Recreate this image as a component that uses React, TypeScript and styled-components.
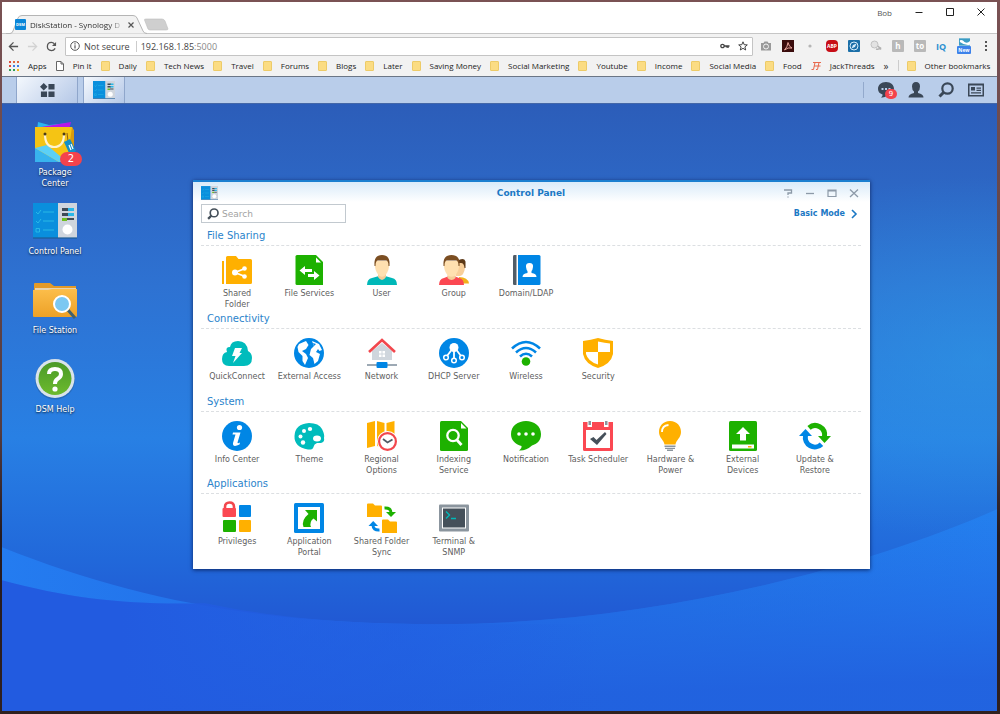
import * as React from 'react';
import styled, { createGlobalStyle, css } from 'styled-components';

const uiFont = '"Open Sans", "Noto Sans", sans-serif';
const dsmFont = '"DejaVu Sans", sans-serif';

/* ---------- drawings ---------- */

const SharedFolderIcon = () => (
  <svg viewBox='0 0 30 30'>
    <path d='M0 6h2v23H0zM4 2.5Q4 1 5.500 1H14l2.500 3H28.500Q30 4 30 5.500V27.500Q30 29 28.500 29H4z' fill='#ffb000' />
    <path d='M23 13.500L13 17.500L23 21.500' fill='none' stroke='#fff' strokeWidth='1.800' />
    <circle cx='22.500' cy='13.500' r='2.300' fill='#fff' />
    <circle cx='13' cy='17.500' r='3' fill='#fff' />
    <circle cx='22.500' cy='21.500' r='2.300' fill='#fff' />
  </svg>
);

const FileServicesIcon = () => (
  <svg viewBox='0 0 30 30'>
    <path d='M3 0H22L29 7V30H3Q1.500 30 1.500 28.500V1.500Q1.500 0 3 0z' fill='#1db100' />
    <path d='M22 2.500V7.500H27z' fill='#fff' />
    <path d='M5.500 15.500L11 11V14H18V17H11V20zM25.500 20.500L20 16V19H14V22H20V25z' fill='#fff' />
  </svg>
);

const UserIcon = () => (
  <svg viewBox='0 0 30 30'>
    <path d='M0 30Q0 24 5 23L12 21H18L25 23Q30 24 30 30z' fill='#00b8b8' />
    <path d='M11 18H19V22Q15 28 11 22z' fill='#f5cc98' />
    <path d='M8 6H22V12Q21 18 17.500 21Q15 22.500 12.500 21Q9 18 8 12z' fill='#ffe0b0' />
    <path d='M7.500 11Q6.500 0 15 0Q23.500 0 22.500 11H21.500Q21.500 5.500 19 5.500H11Q8.500 5.500 8.500 11z' fill='#7b4e22' />
  </svg>
);

const GroupIcon = () => (
  <svg viewBox='0 0 30 30'>
    <path d='M20 28.500V22Q29 22 30 28.500z' fill='#f2b21c' />
    <path d='M17 7H26V13Q25 20 21 21H17z' fill='#f8cf9a' />
    <path d='M18 6Q25 2 26.500 6.500V13H25.500Q25 8 22 8H18z' fill='#5d3917' />
    <path d='M0 30Q0 24 5 23L10 21H15L20 23Q25 24 25 30z' fill='#fb4852' />
    <path d='M8.500 18H16.500V23Q12.500 27 8.500 23z' fill='#f5cc98' />
    <path d='M5 6H20V12Q19 18 15.500 21Q12.500 22.500 9.500 21Q6 18 5 12z' fill='#ffe0b0' />
    <path d='M4.500 11Q3.500 0 12.500 0Q21.500 0 20.500 11H19.500Q19.500 5.500 17 5.500H8Q5.500 5.500 5.500 11z' fill='#7b4e22' />
  </svg>
);

const DomainIcon = () => (
  <svg viewBox='0 0 30 30'>
    <path d='M3 0H5.500V30H3Q2 30 2 28.500V1.500Q2 0 3 0z' fill='#515c66' />
    <path d='M7 0H28Q29.500 0 29.500 1.500V28.500Q29.500 30 28 30H7z' fill='#0086e5' />
    <path d='M15 12Q14.500 8 18.500 8Q22.500 8 22 12Q21.500 15.500 20.500 16V18Q25.500 18.500 25.500 22H11.500Q11.500 18.500 16.500 18V16Q15.500 15.500 15 12z' fill='#fff' />
  </svg>
);

const QuickConnectIcon = () => (
  <svg viewBox='0 0 30 30'>
    <path d='M7 28Q0 28 0 21Q0 15 5 14Q3 9 8 9Q9 3 16 3Q25 3 26 13Q30 15 30 20Q30 28 22 28z' fill='#00bcbc' />
    <path d='M13 10H20L17.500 15H20L11 25L13.500 18H10z' fill='#fff' />
  </svg>
);

const ExternalAccessIcon = () => (
  <svg viewBox='0 0 30 30'>
    <circle cx='15' cy='15' r='15' fill='#0086e5' />
    <path d='M5 6L12 3L14.500 7L12 11L8 13L12 16L14 20L11 27L8.500 23V18L4.500 14L3.500 9z' fill='#fff' />
    <path d='M18 3L25 6L28 12L25.500 13L24 11L22 14L26 16L24 23L20.500 26L19 20L15.500 17L17 11L20 8z' fill='#fff' />
    <path d='M19 5L22 6L20 8z' fill='#0086e5' />
  </svg>
);

const NetworkIcon = () => (
  <svg viewBox='0 0 30 30'>
    <path d='M5 13L15 5L25 13V22H5z' fill='#cfd6dd' />
    <path d='M2 14L15 2L28 14' fill='none' stroke='#f2474d' strokeWidth='2.600' />
    <path d='M12 13h2.500v2.500H12zM15.500 13H18v2.500h-2.500zM12 16.500h2.500V19H12zM15.500 16.500H18V19h-2.500z' fill='#fff' />
    <path d='M0 26H30V28H0z' fill='#9da9b4' />
    <rect x='9.500' y='24' width='11' height='6' rx='1' fill='#0086e5' />
  </svg>
);

const DhcpIcon = () => (
  <svg viewBox='0 0 30 30'>
    <circle cx='15' cy='15' r='15' fill='#0086e5' />
    <circle cx='15' cy='9.500' r='4.500' fill='#fff' />
    <path d='M15 12V20M12.500 12L8 18M17.500 12L22 18' stroke='#fff' strokeWidth='1.800' />
    <g fill='#0086e5' stroke='#fff' strokeWidth='1.500'>
      <circle cx='7' cy='19.500' r='2.300' />
      <circle cx='15' cy='22.500' r='2.300' />
      <circle cx='23' cy='19.500' r='2.300' />
    </g>
  </svg>
);

const WirelessIcon = () => (
  <svg viewBox='0 0 30 30'>
    <g fill='none' stroke='#0086e5' strokeWidth='2.600'>
      <path d='M1 10.500Q15 -2.500 29 10.500' />
      <path d='M5 14.500Q15 5.500 25 14.500' />
      <path d='M9 18.500Q15 13 21 18.500' />
    </g>
    <circle cx='15' cy='23.500' r='4.300' fill='#1db100' />
  </svg>
);

const SecurityIcon = () => (
  <svg viewBox='0 0 30 30'>
    <path d='M0 3Q8 2 15 0Q22 2 30 3V16Q28 26 15 30Q2 26 0 16z' fill='#ffb000' />
    <path d='M15 3.500Q22 5 27 5.500V14H15zM15 14V26.500Q5 23.500 3 16V14z' fill='#fff' />
  </svg>
);

const InfoIcon = () => (
  <svg viewBox='0 0 30 30'>
    <circle cx='15' cy='15' r='15' fill='#0086e5' />
    <circle cx='17.500' cy='6.500' r='2.600' fill='#fff' />
    <path d='M11 11.500H18.500L15.500 21.500Q15.500 23 18 21.500L17.500 23.500Q10.500 27 11 22L13.500 13.500H10.500z' fill='#fff' />
  </svg>
);

const ThemeIcon = () => (
  <svg viewBox='0 0 30 30'>
    <path d='M15 2Q25 2 28 8Q31 14 30 17Q31 21 27 22Q25 22 23 22Q20 23 19.500 26Q19 29 14 28.500Q0 26 0.500 15Q1 3 15 2z' fill='#00bcbc' />
    <g fill='#fff'>
      <ellipse cx='16' cy='8' rx='2.200' ry='2' />
      <circle cx='10' cy='10' r='2' />
      <circle cx='6.500' cy='15.500' r='2' />
      <circle cx='9' cy='21.500' r='2.200' />
      <ellipse cx='23' cy='17.500' rx='4' ry='3' />
    </g>
  </svg>
);

const RegionalIcon = () => (
  <svg viewBox='0 0 30 30'>
    <path d='M0 2L8 0V25L0 27zM10 0L17.500 2V27L10 25zM19.500 2L27.500 0V25L19.500 27z' fill='#ffb000' />
    <circle cx='20.500' cy='20.500' r='10.500' fill='#fff' />
    <circle cx='20.500' cy='20.500' r='8.400' fill='#fff' stroke='#f2474d' strokeWidth='2.200' />
    <path d='M16 18L20.500 21.500L25.500 18.500' fill='none' stroke='#515c66' strokeWidth='1.800' />
  </svg>
);

const IndexingIcon = () => (
  <svg viewBox='0 0 30 30'>
    <path d='M2.500 0H22L29 7V28.500Q29 30 27.500 30H2.500Q1 30 1 28.500V1.500Q1 0 2.500 0z' fill='#1db100' />
    <path d='M22 2V7.500H27.500z' fill='#fff' />
    <circle cx='14' cy='14.500' r='5.700' fill='none' stroke='#fff' strokeWidth='2.300' />
    <path d='M18 19L22.500 24' stroke='#fff' strokeWidth='2.800' />
  </svg>
);

const NotificationIcon = () => (
  <svg viewBox='0 0 30 30'>
    <path d='M15 0C23 0 30 5 30 13C30 20 26 23 21 24.500Q15 30 8 29.500Q11 27 10.500 25C4 23 0 19 0 13C0 5 7 0 15 0z' fill='#1db100' />
    <circle cx='8' cy='13' r='1.800' fill='#fff' />
    <circle cx='15' cy='13' r='1.800' fill='#fff' />
    <circle cx='22' cy='13' r='1.800' fill='#fff' />
  </svg>
);

const SchedulerIcon = () => (
  <svg viewBox='0 0 30 30'>
    <path d='M0 1H30V28.500Q30 30 28.500 30H1.500Q0 30 0 28.500z' fill='#fb4852' />
    <path d='M3 9H27V27H3z' fill='#fff' />
    <path d='M4.500 0H9V6H4.500zM21 0H25.500V6H21z' fill='#fff' />
    <path d='M5.500 0H8V4H5.500zM22 0H24.500V4H22z' fill='#8b959e' />
    <path d='M7 18L10.500 16L13.500 19L22 11L23.500 13L14 24z' fill='#45505a' />
  </svg>
);

const HardwareIcon = () => (
  <svg viewBox='0 0 30 30'>
    <path d='M15 0C22 0 26 5 26 11C26 17 21 19 20.500 23.500H9.500C9 19 4 17 4 11C4 5 8 0 15 0z' fill='#ffb000' />
    <path d='M7 11Q7 4.500 13.500 4' fill='none' stroke='#fff' strokeWidth='1.800' />
    <path d='M9.500 24.500H20.500V26H9.500zM10 26.800H20V28H10zM12 28.600H18V30H12z' fill='#8b959e' />
  </svg>
);

const DevicesIcon = () => (
  <svg viewBox='0 0 30 30'>
    <rect x='1' width='28' height='30' rx='1.500' fill='#1db100' />
    <path d='M15 6L22 13H18V19.500H12V13H8zM4 23.500H26V27.500H4z' fill='#fff' />
    <path d='M20 25H23.500V26.500H20z' fill='#ffb000' />
  </svg>
);

const UpdateIcon = () => (
  <svg viewBox='0 0 30 30'>
    <path d='M9 6.800A9.500 9.500 0 0 1 24.500 15.500' fill='none' stroke='#1db100' strokeWidth='5' />
    <path d='M18 15H31L24.500 22z' fill='#1db100' />
    <path d='M21.500 23.200A9.500 9.500 0 0 1 5.500 14.500' fill='none' stroke='#0086e5' strokeWidth='5' />
    <path d='M-1 15H12L5.500 8z' fill='#0086e5' />
  </svg>
);

const PrivilegesIcon = () => (
  <svg viewBox='0 0 30 30'>
    <path d='M3 7V4Q3 -0.500 7.500 -0.500Q12 -0.500 12 4V7' fill='none' stroke='#f2474d' strokeWidth='2.600' />
    <rect x='0.500' y='5' width='13.500' height='9' rx='1' fill='#fb4852' />
    <rect x='17' y='2' width='12' height='12' rx='1' fill='#0086e5' />
    <rect x='1' y='17' width='13' height='12' rx='1' fill='#1db100' />
    <rect x='17' y='17' width='12' height='12' rx='1' fill='#ffb000' />
  </svg>
);

const PortalIcon = () => (
  <svg viewBox='0 0 30 30'>
    <rect width='30' height='30' rx='1.500' fill='#0086e5' />
    <path d='M4 4H26V26H4z' fill='#fff' />
    <path d='M11 7H23V18.500L19.500 15.500Q15 19 17 24H9.500Q7 17 14.500 11z' fill='#1db100' />
  </svg>
);

const FolderSyncIcon = () => (
  <svg viewBox='0 0 30 30'>
    <path d='M0 1.500Q0 0.500 1 0.500H6L8 2.500H14Q15 2.500 15 3.500V14H0zM15 17.500Q15 16.500 16 16.500H21L23 18.500H29Q30 18.500 30 19.500V30H15z' fill='#ffb000' />
    <path d='M17.500 5Q24 4.500 24 10' fill='none' stroke='#1db100' strokeWidth='3' />
    <path d='M19 9H29L24 14z' fill='#1db100' />
    <path d='M12.500 27Q6 27.500 6 22' fill='none' stroke='#0086e5' strokeWidth='3' />
    <path d='M1.500 23H11L6.200 18z' fill='#0086e5' />
  </svg>
);

const TerminalIcon = () => (
  <svg viewBox='0 0 30 30'>
    <rect y='1.500' width='30' height='27' rx='1' fill='#8b959e' />
    <path d='M3 4.500H27V25.500H3z' fill='#fff' />
    <path d='M4 5.500H26V24.500H4z' fill='#45505a' />
    <path d='M7 8.500L10.500 12L7 15.500M12 15.500H17' fill='none' stroke='#00b8b8' strokeWidth='1.400' />
  </svg>
);

const ControlPanelIcon = () => (
  <svg viewBox='0 0 44 36'>
    <path d='M0 0H25V35H0z' fill='#0a8fdd' />
    <path d='M25 0H44V35H25z' fill='#cfd5dd' />
    <path d='M0 34H44V36H0z' fill='#1c5c94' opacity='0.600' />
    <path d='M3 9l2 2l3-4M10 9h11M3 18l2 2l3-4M10 18h11M3 25.500h3.500v3.500h-3.500zM10 27h11' fill='none' stroke='#2fc0e8' opacity='0.850' />
    <path d='M29 5H36V8H29zM29 10H36V13H29z' fill='#3f4a55' />
    <path d='M35 5H41V8H35zM35 10H41V13H35z' fill='#29b7e8' />
    <path d='M29 15H34V18H29z' fill='#6fbf1f' />
    <path d='M34 15H41V17H34z' fill='#3f4a55' />
    <circle cx='34.500' cy='26.500' r='5' fill='#fff' />
  </svg>
);

const PackageIcon = () => (
  <svg viewBox='0 0 44 42'>
    <path d='M5 1L16 4L36 2V10H4z' fill='#2cb6f0' />
    <path d='M8 6L38 1L35 12H6z' fill='#b518e8' />
    <path d='M2 6H39L41 10V41H2z' fill='#f5c414' />
    <path d='M39 6L41 10V41H34z' fill='#d99a0b' />
    <path d='M2 27L26 41H2z' fill='#38b4ee' />
    <path d='M2 27L14 24L34 41H26z' fill='#5bd0f7' />
    <path d='M12 13Q12 26 21 26Q31 26 31 13' fill='none' stroke='#fff3cf' strokeWidth='2.200' />
    <circle cx='12' cy='13' r='1.500' fill='#4b3a14' />
    <circle cx='31' cy='13' r='1.500' fill='#4b3a14' />
    <path d='M34 12L35 20' stroke='#8a5a14' />
    <path d='M31 21L37 18L43 30L37 34z' fill='#1390c8' />
    <path d='M36 24l2 5M38 23l2 5' stroke='#fff' strokeWidth='1.200' />
  </svg>
);

const FileStationIcon = () => (
  <svg viewBox='0 0 44 36'>
    <defs>
      <linearGradient id='folder' x2='0' y2='1'>
        <stop offset='0' stopColor='#fcbe4b' />
        <stop offset='1' stopColor='#eda127' />
      </linearGradient>
    </defs>
    <path d='M1 2Q1 1 2 1H17L21 4H43V12H1z' fill='#e39a28' />
    <path d='M2 6H43V10H2z' fill='#e8d3ae' />
    <path d='M0 8H15L19 7H44V34Q44 35 43 35H1Q0 35 0 34z' fill='url(#folder)' />
    <path d='M35 28L42 36' stroke='#41616e' strokeWidth='3' />
    <circle cx='29' cy='22' r='8' fill='#7cc8f2' stroke='#fff' strokeWidth='2' />
  </svg>
);

const HelpIcon = () => (
  <svg viewBox='0 0 42 42'>
    <defs>
      <linearGradient id='help' x2='0' y2='1'>
        <stop offset='0' stopColor='#4a9a28' />
        <stop offset='1' stopColor='#6dba2e' />
      </linearGradient>
    </defs>
    <circle cx='21' cy='21.500' r='20' fill='#204f8d' opacity='0.400' />
    <circle cx='21' cy='20.500' r='19.500' fill='#d9e3ea' />
    <circle cx='21' cy='20.500' r='16.500' fill='url(#help)' />
    <path d='M15 16Q15 11 21 11Q27 11 27 16Q27 19 23.500 21Q21 22.500 21 26' fill='none' stroke='#fff' strokeWidth='4' />
    <circle cx='21' cy='31' r='2.600' fill='#fff' />
  </svg>
);

const SearchIcon = () => (
  <svg viewBox='0 0 16 16'>
    <circle cx='9.500' cy='6.500' r='5.200' fill='none' stroke='currentColor' strokeWidth='2.200' />
    <path d='M6 10L1.500 14.500' stroke='currentColor' strokeWidth='3' />
  </svg>
);

const ChatIcon = () => (
  <svg viewBox='0 0 16 16'>
    <path d='M8 0C13 0 16 3 16 7C16 11 13 13 9 13.500Q7 16 3 15.500Q5 14 4.500 12.500Q0 11 0 7C0 3 3 0 8 0z' fill='currentColor' />
    <path d='M3.500 6h2v2h-2zM7 6h2v2H7zM10.500 6h2v2h-2z' fill='#b9cdea' />
  </svg>
);

const PersonIcon = () => (
  <svg viewBox='0 0 16 16'>
    <path d='M4 4.500Q4 0 8 0Q12 0 12 4.500Q12 8 10 9.500V11Q15.500 12 15.500 15.500H0.500Q0.500 12 6 11V9.500Q4 8 4 4.500z' fill='currentColor' />
  </svg>
);

const WidgetsIcon = () => (
  <svg viewBox='0 0 16 16'>
    <path d='M0 1.500H16V14.500H0zM1.500 3.500V13H14.500V3.500z' fill='currentColor' fillRule='evenodd' />
    <path d='M3 5H7V8.500H3zM8.500 5.500H13V6.800H8.500zM8.500 7.800H13V9H8.500zM3 10.200H13V11.500H3z' fill='currentColor' />
  </svg>
);

const MenuIcon = () => (
  <svg viewBox='0 0 16 16'>
    <path d='M4 0L8 4L4 8L0 4zM9 1H15.500V7H9zM1 9H7.500V15H1zM9 9H15.500V15H9z' fill='currentColor' />
  </svg>
);

const BackIcon = () => (
  <svg viewBox='0 0 12 12'>
    <path d='M11 6H2M6 1.500L1.500 6L6 10.500' fill='none' stroke='currentColor' strokeWidth='1.400' />
  </svg>
);

const ForwardIcon = () => (
  <svg viewBox='0 0 12 12'>
    <path d='M1 6H10M6 1.500L10.500 6L6 10.500' fill='none' stroke='#d2d2d2' strokeWidth='1.400' />
  </svg>
);

const ReloadIcon = () => (
  <svg viewBox='0 0 12 12'>
    <path d='M10 8Q8.500 10.500 6 10.500Q1.500 10 1.500 6Q1.500 1.500 6 1.500Q8.500 1.500 9.500 4' fill='none' stroke='currentColor' strokeWidth='1.400' />
    <path d='M11 1V5.500H6.500z' fill='currentColor' />
  </svg>
);

const Wallpaper = () => (
  <WallpaperSvg viewBox='0 0 995 608' preserveAspectRatio='none' aria-hidden='true'>
    <defs>
      <linearGradient id='sky' x2='0' y2='1'>
        <stop offset='0' stopColor='#2c5db9' />
        <stop offset='0.300' stopColor='#2e72d2' />
        <stop offset='0.550' stopColor='#2880e4' />
        <stop offset='0.750' stopColor='#2168da' />
        <stop offset='0.860' stopColor='#2158d3' />
        <stop offset='1' stopColor='#2158d3' />
      </linearGradient>
      <radialGradient id='glow' cx='0.980' cy='0.420' r='0.300'>
        <stop offset='0' stopColor='#2e9be6' stopOpacity='0.550' />
        <stop offset='1' stopColor='#2e9be6' stopOpacity='0' />
      </radialGradient>
      <linearGradient id='wave' x2='1'>
        <stop offset='0' stopColor='#247cf0' />
        <stop offset='0.400' stopColor='#226ae6' />
        <stop offset='0.700' stopColor='#2277e6' />
        <stop offset='1' stopColor='#2480ee' />
      </linearGradient>
      <linearGradient id='deep' x2='0.200' y2='1'>
        <stop offset='0.200' stopColor='#2264e6' stopOpacity='0' />
        <stop offset='1' stopColor='#2160de' stopOpacity='0.900' />
      </linearGradient>
      <linearGradient id='shade' x2='1'>
        <stop offset='0.200' stopColor='#225be0' />
        <stop offset='1' stopColor='#225be0' stopOpacity='0' />
      </linearGradient>
    </defs>
    <path d='M0 0H995V608H0z' fill='url(#sky)' />
    <path d='M0 0H995V608H0z' fill='url(#glow)' />
    <path d='M0 444C140 500 270 521 438 521C640 521 850 470 995 406V608H0z' fill='url(#wave)' />
    <path d='M0 477C70 496 130 502 203 500C280 516 350 521 438 521C640 521 850 470 995 406V608H0z' fill='url(#deep)' />
    <path d='M0 477C70 496 130 502 203 500C280 516 350 521 438 521H600V608H0z' fill='url(#shade)' />
  </WallpaperSvg>
);

/* ---------- data ---------- */

const bookmarks = [
  'Daily',
  'Tech News',
  'Travel',
  'Forums',
  'Blogs',
  'Later',
  'Saving Money',
  'Social Marketing',
  'Youtube',
  'Income',
  'Social Media',
  'Food',
];

interface Item {
  label: string;
  icon: React.FC;
}

const sections: { title: string; items: Item[] }[] = [
  {
    title: 'File Sharing',
    items: [
      { label: 'Shared\nFolder', icon: SharedFolderIcon },
      { label: 'File Services', icon: FileServicesIcon },
      { label: 'User', icon: UserIcon },
      { label: 'Group', icon: GroupIcon },
      { label: 'Domain/LDAP', icon: DomainIcon },
    ],
  },
  {
    title: 'Connectivity',
    items: [
      { label: 'QuickConnect', icon: QuickConnectIcon },
      { label: 'External Access', icon: ExternalAccessIcon },
      { label: 'Network', icon: NetworkIcon },
      { label: 'DHCP Server', icon: DhcpIcon },
      { label: 'Wireless', icon: WirelessIcon },
      { label: 'Security', icon: SecurityIcon },
    ],
  },
  {
    title: 'System',
    items: [
      { label: 'Info Center', icon: InfoIcon },
      { label: 'Theme', icon: ThemeIcon },
      { label: 'Regional\nOptions', icon: RegionalIcon },
      { label: 'Indexing\nService', icon: IndexingIcon },
      { label: 'Notification', icon: NotificationIcon },
      { label: 'Task Scheduler', icon: SchedulerIcon },
      { label: 'Hardware &\nPower', icon: HardwareIcon },
      { label: 'External\nDevices', icon: DevicesIcon },
      { label: 'Update &\nRestore', icon: UpdateIcon },
    ],
  },
  {
    title: 'Applications',
    items: [
      { label: 'Privileges', icon: PrivilegesIcon },
      { label: 'Application\nPortal', icon: PortalIcon },
      { label: 'Shared Folder\nSync', icon: FolderSyncIcon },
      { label: 'Terminal &\nSNMP', icon: TerminalIcon },
    ],
  },
];

const shortcuts = [
  { label: 'Package Center', icon: PackageIcon, badge: 2 },
  { label: 'Control Panel', icon: ControlPanelIcon },
  { label: 'File Station', icon: FileStationIcon },
  { label: 'DSM Help', icon: HelpIcon },
];

/* ---------- parts ---------- */

const Bookmark: React.FC<{ label: string; children: React.ReactNode }> = ({ label, children }) => (
  <BookmarkLink href='#'>
    {children}
    {label}
  </BookmarkLink>
);

const Browser: React.FC = () => (
  <header>
    <TabStrip>
      <TabShape>
        <svg viewBox='0 0 170 19' aria-hidden='true'>
          <path d='M0 18.500H4Q6 18.500 7 16L12 3Q13 0.500 16 0.500H127Q130 0.500 131 3L137 16Q138 18.500 141 18.500' fill='#f2f2f2' stroke='#b5b5b5' />
          <path d='M138.500 5Q138 4 140 4H156Q158 4 159 6L162 14Q162 15 160 15H144Q143 15 142 14z' fill='#cfcfcf' stroke='#bdbdbd' strokeWidth='0.600' />
        </svg>
        <TabContent>
          <Favicon>DSM</Favicon>
          <TabTitle>DiskStation - Synology D</TabTitle>
          <TabClose aria-label='Close tab'>
            <svg viewBox='0 0 6 6'>
              <path d='M0.500 0.500L5.500 5.500M5.500 0.500L0.500 5.500' stroke='#555' strokeWidth='1.200' />
            </svg>
          </TabClose>
        </TabContent>
      </TabShape>
      <WindowButtons>
        <Profile>Bob</Profile>
        <button aria-label='Minimize'>
          <svg viewBox='0 0 8 8'><path d='M0.500 4.500H7.500' stroke='#222' /></svg>
        </button>
        <button aria-label='Maximize'>
          <svg viewBox='0 0 8 8'><path d='M0.500 0.500H7.500V7.500H0.500z' fill='none' stroke='#222' /></svg>
        </button>
        <button aria-label='Close'>
          <svg viewBox='0 0 8 8'><path d='M0.500 0.500L7.500 7.500M7.500 0.500L0.500 7.500' stroke='#222' /></svg>
        </button>
      </WindowButtons>
    </TabStrip>
    <Toolbar>
      <NavButton aria-label='Back'><BackIcon /></NavButton>
      <NavButton aria-label='Forward' disabled><ForwardIcon /></NavButton>
      <NavButton aria-label='Reload'><ReloadIcon /></NavButton>
      <Omnibox>
        <svg width='10' height='10' viewBox='0 0 10 10'>
          <circle cx='5' cy='5' r='4.300' fill='none' stroke='#555' />
          <path d='M5 4.300V7.500M5 2.300V3.400' stroke='#555' strokeWidth='1.200' />
        </svg>
        <span>Not secure</span>
        <OmniDivider />
        <Address>192.168.1.85<em>:5000</em></Address>
        <svg width='10' height='10' viewBox='0 0 10 10'>
          <circle cx='2.500' cy='5' r='1.700' fill='none' stroke='#444' strokeWidth='1.300' />
          <path d='M4 5H9.500M8 5V7M6.500 5V6.500' stroke='#444' strokeWidth='1.400' />
        </svg>
        <svg width='10' height='10' viewBox='0 0 10 10'>
          <path d='M5 0.800L6.200 3.700L9.300 3.900L6.900 5.900L7.700 9L5 7.300L2.300 9L3.100 5.900L0.700 3.900L3.800 3.700z' fill='none' stroke='#444' />
        </svg>
      </Omnibox>
      <Extensions>
        <svg viewBox='0 0 12 12'>
          <path d='M1 3H3.500L4.500 1.500H7.500L8.500 3H11V10.500H1z' fill='#9a9a9a' />
          <circle cx='6' cy='6.500' r='2.500' fill='#9a9a9a' stroke='#f2f2f2' />
        </svg>
        <svg viewBox='0 0 12 12'>
          <path d='M0 0H12V12H0z' fill='#3b0d0d' />
          <path d='M2.500 10Q5.500 7 6 2.500Q7 7 10 8Q6 7 2.500 10z' fill='none' stroke='#e9a59c' />
        </svg>
        <svg viewBox='0 0 12 12'><circle cx='6' cy='6' r='1.600' fill='#b5b5b5' /></svg>
        <ExtBadge $shape='octagon' $bg='#c70d16'>ABP</ExtBadge>
        <svg viewBox='0 0 12 12'>
          <rect width='12' height='12' rx='1' fill='#1b6fa8' />
          <circle cx='6' cy='6' r='4' fill='none' stroke='#d5ecfa' />
          <path d='M8.500 3.500L7 7L3.500 8.500L5 5z' fill='#d5ecfa' />
        </svg>
        <svg viewBox='0 0 12 12'>
          <circle cx='4.500' cy='4.500' r='3.500' fill='#e3e3e3' stroke='#c2c2c2' />
          <path d='M6 9Q9 10 11 7.500M8 6L11 9.500' stroke='#b2b2b2' strokeWidth='1.500' fill='none' />
        </svg>
        <ExtBadge $shape='square' $bg='#b9b9b9'>h</ExtBadge>
        <ExtBadge $shape='square' $bg='#b9b9b9'>to</ExtBadge>
        <IqText>IQ</IqText>
        <NewExt>
          <svg viewBox='0 0 12 8'>
            <path d='M0 0H12V8H0z' fill='#3b9cc4' />
            <path d='M1 2Q4 1 6 4Q9 6 12 3V7Q6 8 1 4z' fill='#fff' />
          </svg>
          <b>New</b>
        </NewExt>
        <svg viewBox='0 0 12 12'>
          <path d='M5 1h2v2H5zM5 5h2v2H5zM5 9h2v2H5z' fill='#555' />
        </svg>
      </Extensions>
    </Toolbar>
    <BookmarkBar>
      <Bookmark label='Apps'>
        <svg width='10' height='10' viewBox='0 0 10 10'>
          <path d='M0 0h2v2H0zM0 4h2v2H0z' fill='#de4a3b' />
          <path d='M4 0h2v2H4zM8 0h2v2H8z' fill='#e0683b' />
          <path d='M4 4h2v2H4zM8 4h2v2H8z' fill='#3f7fe0' />
          <path d='M0 8h2v2H0zM4 8h2v2H4z' fill='#2f9e55' />
          <path d='M8 8h2v2H8z' fill='#f2b91c' />
        </svg>
      </Bookmark>
      <Bookmark label='Pin It'>
        <svg width='8' height='10' viewBox='0 0 8 10'>
          <path d='M0.500 0.500H5L7.500 3V9.500H0.500zM5 0.500V3H7.500' fill='#fff' stroke='#666' />
        </svg>
      </Bookmark>
      {bookmarks.map((label) => (
        <Bookmark key={label} label={label}>
          <FolderIcon />
        </Bookmark>
      ))}
      <Bookmark label='JackThreads'>
        <svg width='10' height='10' viewBox='0 0 10 10'>
          <path d='M0.500 8.500H2.500L4 1.500M2 1.500H10M5 8.500H6.500L8 1.500M3 5H9.500' fill='none' stroke='#e8694c' />
        </svg>
      </Bookmark>
      <Overflow aria-label='More bookmarks'>»</Overflow>
      <OtherBookmarks>
        <Bookmark label='Other bookmarks'>
          <FolderIcon />
        </Bookmark>
      </OtherBookmarks>
    </BookmarkBar>
  </header>
);

const ControlPanel: React.FC = () => (
  <PanelWindow>
    <TitleBar>
      <TitleIcon><ControlPanelIcon /></TitleIcon>
      <h1>Control Panel</h1>
      <TitleButtons>
        <button aria-label='Help'>
          <svg viewBox='0 0 10 10'><path d='M1 2H8.500V5H5V7M5 8.500V9.500' fill='none' stroke='currentColor' strokeWidth='1.300' /></svg>
        </button>
        <button aria-label='Minimize'>
          <svg viewBox='0 0 10 10'><path d='M1 5.500H9' stroke='currentColor' strokeWidth='1.300' /></svg>
        </button>
        <button aria-label='Maximize'>
          <svg viewBox='0 0 10 10'><path d='M1 2H9V8.500H1zM1 3H9' fill='none' stroke='currentColor' strokeWidth='1.200' /></svg>
        </button>
        <button aria-label='Close'>
          <svg viewBox='0 0 10 10'><path d='M1 1.500L9 9M9 1.500L1 9' stroke='currentColor' strokeWidth='1.300' /></svg>
        </button>
      </TitleButtons>
    </TitleBar>
    <PanelTools>
      <SearchBox>
        <SearchIcon />
        <input type='text' placeholder='Search' aria-label='Search' />
      </SearchBox>
      <ModeButton>
        Basic Mode
        <svg width='6' height='10' viewBox='0 0 6 10'>
          <path d='M1 1L5 5L1 9' fill='none' stroke='currentColor' strokeWidth='1.600' />
        </svg>
      </ModeButton>
    </PanelTools>
    <PanelBody>
      {sections.map((section) => (
        <Section key={section.title}>
          <h2>{section.title}</h2>
          <ItemGrid>
            {section.items.map(({ label, icon: Icon }) => (
              <ItemButton key={label}>
                <Icon />
                <span>{label}</span>
              </ItemButton>
            ))}
          </ItemGrid>
        </Section>
      ))}
    </PanelBody>
  </PanelWindow>
);

const App: React.FC = () => (
  <Screen>
    <GlobalStyle />
    <BrowserWindow>
      <Browser />
      <Taskbar>
        <TaskButton aria-label='Main Menu' $wide><MenuIcon /></TaskButton>
        <TaskButton aria-label='Control Panel'><ControlPanelIcon /></TaskButton>
        <Tray>
          <TrayButton aria-label='Notifications'>
            <ChatIcon />
            <Badge $small>9</Badge>
          </TrayButton>
          <TrayButton aria-label='Options'><PersonIcon /></TrayButton>
          <TrayButton aria-label='Search'><SearchIcon /></TrayButton>
          <TrayButton aria-label='Widgets'><WidgetsIcon /></TrayButton>
        </Tray>
      </Taskbar>
      <Desktop>
        <Wallpaper />
        <Shortcuts>
          {shortcuts.map(({ label, icon: Icon, badge }) => (
            <Shortcut key={label}>
              <ShortcutIcon>
                <Icon />
                {badge ? <Badge>{badge}</Badge> : null}
              </ShortcutIcon>
              <span>{label}</span>
            </Shortcut>
          ))}
        </Shortcuts>
        <ControlPanel />
      </Desktop>
    </BrowserWindow>
  </Screen>
);

export default App;

/* ---------- styles ---------- */

const GlobalStyle = createGlobalStyle`
  * {
    box-sizing: border-box;
  }
  body {
    margin: 0;
  }
  button {
    margin: 0;
    padding: 0;
    border: 0;
    background: none;
    font: inherit;
    color: inherit;
  }
  svg {
    display: block;
    flex: none;
    overflow: visible;
  }
  h1, h2 {
    margin: 0;
  }
`;

const Screen = styled.div`
  min-height: 100vh;
  padding: 2px 3px 3px 2px;
  display: flex;
  background: linear-gradient(#7a5254 0, #543c40 60%, #241a20 75%, #30201f 100%);
`;

const BrowserWindow = styled.div`
  flex: 1;
  min-width: 0;
  display: flex;
  flex-direction: column;
  background: #f2f2f2;
  font-family: ${uiFont};
  color: #333;
`;

const TabStrip = styled.div`
  height: 32px;
  display: flex;
  align-items: flex-end;
  justify-content: space-between;
  background: #fff;
  border-bottom: 1px solid #c6c6c6;
`;

const TabShape = styled.div`
  position: relative;
  margin-left: 4px;
  margin-bottom: -1px;

  > svg {
    width: 170px;
    height: 19px;
  }
`;

const TabContent = styled.div`
  position: absolute;
  inset: 0 38px 0 9px;
  display: flex;
  align-items: center;
`;

const Favicon = styled.span`
  width: 11px;
  height: 11px;
  margin-right: 4px;
  border-radius: 1px;
  background: #0a86d8;
  color: #fff;
  font: bold 4px/11px ${uiFont};
  text-align: center;
`;

const TabTitle = styled.span`
  flex: 1;
  overflow: hidden;
  white-space: nowrap;
  font-size: 8px;
  mask-image: linear-gradient(90deg, #000 84%, transparent);
`;

const TabClose = styled.button`
  margin: 0 4px;

  svg {
    width: 6px;
    height: 6px;
  }
`;

const WindowButtons = styled.div`
  align-self: stretch;
  display: flex;
  align-items: flex-start;
  gap: 23px;
  padding: 6px 12px 0 0;

  svg {
    width: 8px;
    height: 8px;
  }
`;

const Profile = styled.span`
  font-size: 8px;
  line-height: 10px;
  color: #555;
`;

const Toolbar = styled.div`
  height: 24px;
  display: flex;
  align-items: center;
  padding: 0 8px 0 6px;
`;

const NavButton = styled.button`
  margin-right: 8px;
  color: #555;

  svg {
    width: 11px;
    height: 11px;
  }
`;

const Omnibox = styled.div`
  flex: 1;
  height: 19px;
  display: flex;
  align-items: center;
  gap: 4px;
  padding: 0 4px;
  background: #fff;
  border: 1px solid #c4c4c4;
  border-radius: 1px;
  font-size: 9px;
  color: #444;

  > svg:last-child {
    margin-left: 4px;
  }
`;

const OmniDivider = styled.span`
  width: 1px;
  height: 11px;
  margin: 0 0 0 2px;
  background: #ccc;
`;

const Address = styled.span`
  flex: 1;

  em {
    font-style: normal;
    color: #888;
  }
`;

const Extensions = styled.div`
  display: flex;
  align-items: center;
  gap: 10px;
  padding-left: 7px;

  > svg {
    width: 12px;
    height: 12px;
  }

  > svg:last-child {
    margin-right: -3px;
  }
`;

const ExtBadge = styled.span<{ $shape: 'octagon' | 'square'; $bg: string }>`
  width: 12px;
  height: 12px;
  background: ${(props) => props.$bg};
  border-radius: ${(props) => (props.$shape === 'octagon' ? '4px' : '1px')};
  color: #fff;
  font-weight: bold;
  font-size: ${(props) => (props.$shape === 'octagon' ? '5px' : '8px')};
  line-height: 12px;
  text-align: center;
`;

const IqText = styled.b`
  width: 12px;
  font-size: 9px;
  color: #2b8fd0;
`;

const NewExt = styled.span`
  width: 12px;
  display: flex;
  flex-direction: column;
  align-items: center;

  svg {
    width: 11px;
    height: 8px;
  }

  b {
    padding: 0 1px;
    border-radius: 1px;
    background: #3c82ea;
    color: #fff;
    font: bold 5px/8px ${uiFont};
  }
`;

const BookmarkBar = styled.nav`
  height: 19px;
  display: flex;
  align-items: center;
  gap: 9px;
  padding: 0 10px 3px 7px;
  border-bottom: 1px solid #6b7686;
  white-space: nowrap;
  font-size: 8px;
`;

const BookmarkLink = styled.a`
  display: flex;
  align-items: center;
  gap: 9px;
  color: #222;
  text-decoration: none;
`;

const FolderIcon = styled.i`
  width: 9px;
  height: 10px;
  background: #fbdc83;
  border: 1px solid #edcb68;
  border-radius: 1px;
`;

const Overflow = styled.button`
  margin-left: auto;
  font-size: 10px;
`;

const OtherBookmarks = styled.div`
  padding-left: 8px;
  border-left: 1px solid #ccc;
`;

const Taskbar = styled.div`
  height: 27px;
  display: flex;
  padding-left: 14px;
  background: #b9cdea;
  border-bottom: 1px solid #4467a8;
  color: #3a4757;
`;

const TaskButton = styled.button<{ $wide?: boolean }>`
  width: ${(props) => (props.$wide ? '62px' : '42px')};
  margin-right: 5px;
  display: flex;
  align-items: center;
  justify-content: center;
  border: 1px solid #8fa6cb;
  border-width: 0 1px;
  background: linear-gradient(135deg, #f4f8fd, #b5c8e7);

  svg {
    ${(props) =>
      props.$wide
        ? css`
            width: 15px;
            height: 15px;
          `
        : css`
            width: 22px;
            height: 18px;
          `}
  }
`;

const Tray = styled.div`
  margin-left: auto;
  align-self: center;
  display: flex;
  gap: 14px;
  padding: 0 13px 0 14px;
  border-left: 1px solid #93a9cc;
`;

const TrayButton = styled.button`
  position: relative;

  svg {
    width: 16px;
    height: 16px;
  }
`;

const Badge = styled.b<{ $small?: boolean }>`
  position: absolute;
  right: ${(props) => (props.$small ? '-3px' : '-5px')};
  bottom: ${(props) => (props.$small ? '-1px' : '-3px')};
  width: ${(props) => (props.$small ? '12px' : '22px')};
  height: ${(props) => (props.$small ? '10px' : '14px')};
  border-radius: 7px;
  background: #f4434c;
  color: #fff;
  font: ${(props) => (props.$small ? '7px/10px' : '10px/14px')} ${dsmFont};
  text-align: center;
`;

const Desktop = styled.main`
  position: relative;
  flex: 1;
  overflow: hidden;
  font-family: ${dsmFont};
`;

const WallpaperSvg = styled.svg`
  position: absolute;
  width: 100%;
  height: 100%;
`;

const Shortcuts = styled.div`
  position: relative;
  width: 70px;
  margin: 17px 0 0 18px;
  display: grid;
  grid-auto-rows: 79px;
`;

const Shortcut = styled.button`
  display: flex;
  flex-direction: column;
  align-items: center;
  font-size: 8px;
  line-height: 11px;
  color: #fff;
  text-shadow: 0 1px 2px rgba(0, 0, 0, 0.8);

  span {
    max-width: 60px;
  }
`;

const ShortcutIcon = styled.div`
  position: relative;
  width: 44px;
  height: 42px;
  margin-bottom: 4px;
  display: flex;
  align-items: center;
  justify-content: center;

  svg {
    max-width: 44px;
    max-height: 42px;
    width: 100%;
  }

  b {
    text-shadow: none;
  }
`;

const PanelWindow = styled.section`
  position: absolute;
  left: 191px;
  right: 127px;
  top: 76px;
  min-height: 389px;
  display: flex;
  flex-direction: column;
  padding: 0 9px 11px 8px;
  border-top: 2px solid #1a7fd0;
  background: linear-gradient(#d9ebf9, #fff 20px);
  box-shadow: 0 1px 4px rgba(0, 10, 50, 0.7);
  color: #606060;
`;

const TitleBar = styled.div`
  height: 21px;
  display: grid;
  grid-template-columns: 1fr auto 1fr;
  align-items: center;
  color: #1b78c4;

  h1 {
    font-size: 9px;
    line-height: 12px;
  }
`;

const TitleIcon = styled.div`
  svg {
    width: 17px;
    height: 14px;
  }
`;

const TitleButtons = styled.div`
  justify-self: end;
  display: flex;
  gap: 12px;
  padding-right: 2px;
  color: #8d9aa8;

  svg {
    width: 10px;
    height: 10px;
  }
`;

const PanelTools = styled.div`
  display: flex;
  align-items: center;
  justify-content: space-between;
  margin-top: 1px;
`;

const SearchBox = styled.label`
  width: 145px;
  height: 19px;
  display: flex;
  align-items: center;
  gap: 3px;
  padding: 0 5px;
  background: #fff;
  border: 1px solid #c2c9cf;
  color: #45505a;

  svg {
    width: 12px;
    height: 12px;
  }

  input {
    flex: 1;
    min-width: 0;
    padding: 0;
    border: 0;
    outline: 0;
    background: none;
    font: 9px/12px ${dsmFont};
  }

  input::placeholder {
    color: #a2a2a2;
  }
`;

const ModeButton = styled.button`
  display: flex;
  align-items: center;
  gap: 6px;
  padding-right: 4px;
  font-weight: bold;
  font-size: 8px;
  color: #1b78c4;
`;

const PanelBody = styled.div`
  flex: 1;
  display: grid;
  grid-template-rows: repeat(4, minmax(82px, 1fr));
  margin-top: 4px;
`;

const Section = styled.section`
  h2 {
    padding-left: 6px;
    border-bottom: 1px dashed #dcdfe2;
    font-weight: normal;
    font-size: 10px;
    line-height: 18px;
    color: #2a83cb;
  }
`;

const ItemGrid = styled.div`
  display: grid;
  grid-template-columns: repeat(9, 1fr);
  margin-bottom: -1px;
  padding: 9px 10px 0 0;
`;

const ItemButton = styled.button`
  display: flex;
  flex-direction: column;
  align-items: center;
  font-size: 8px;
  line-height: 11px;

  svg {
    width: 30px;
    height: 30px;
    margin-bottom: 3px;
  }

  span {
    white-space: pre-line;
  }
`;
